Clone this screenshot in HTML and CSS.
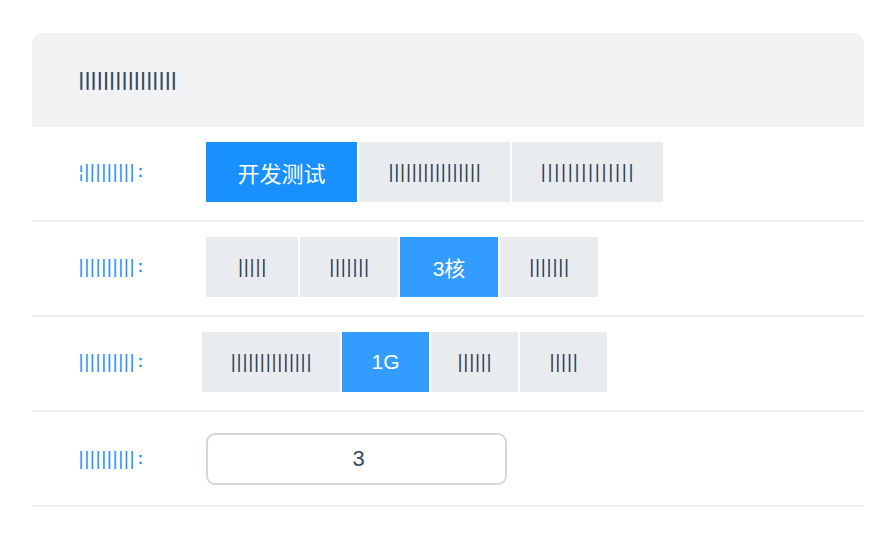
FILE: index.html
```html
<!DOCTYPE html>
<html lang="zh-CN">
<head>
<meta charset="utf-8">
<title>配置</title>
<link rel="stylesheet" href="styles.css">
</head>
<body>
<div class="card">
  <div class="card-head"><span class="bars bars-head">||||||||||||||||</span></div>

  <div class="row">
    <div class="label"><span class="bars">¦|||||||||</span><span class="colon">:</span></div>
    <div class="opts">
      <button class="opt w151 primary">开发测试</button>
      <button class="opt w151"><span class="bars">||||||||||||||||</span></button>
      <button class="opt w151"><span class="bars wide">||||||||||||||</span></button>
    </div>
  </div>

  <div class="row">
    <div class="label"><span class="bars">||||||||||</span><span class="colon">:</span></div>
    <div class="opts">
      <button class="opt w92"><span class="bars">|||||</span></button>
      <button class="opt w98"><span class="bars">|||||||</span></button>
      <button class="opt w98 active">3核</button>
      <button class="opt w98"><span class="bars">|||||||</span></button>
    </div>
  </div>

  <div class="row">
    <div class="label"><span class="bars">||||||||||</span><span class="colon">:</span></div>
    <div class="opts shift">
      <button class="opt w138"><span class="bars">||||||||||||||</span></button>
      <button class="opt w87 active">1G</button>
      <button class="opt w87"><span class="bars">||||||</span></button>
      <button class="opt w87"><span class="bars">|||||</span></button>
    </div>
  </div>

  <div class="row row-last">
    <div class="label"><span class="bars">||||||||||</span><span class="colon">:</span></div>
    <div class="opts">
      <div class="num">3</div>
    </div>
  </div>
</div>
</body>
</html>
```

FILE: styles.css
```css
* { box-sizing: border-box; }

body {
  margin: 0;
  padding: 33px 32px 0 32px;
  background: #ffffff;
  font-family: "Liberation Sans", "Noto Sans CJK SC", sans-serif;
}

.card {
  width: 832px;
}

.card-head {
  height: 94px;
  background: #f1f2f4;
  border-radius: 10px 10px 0 0;
  display: flex;
  align-items: center;
  padding-left: 46px;
}

.bars {
  font-family: "DejaVu Sans", sans-serif;
  font-size: 18px;
  letter-spacing: -0.25px;
  line-height: 1;
  color: #2f4052;
  white-space: nowrap;
}

.bars-head {
  font-weight: bold;
  letter-spacing: -0.4px;
  color: #34495e;
}

.bars.wide {
  letter-spacing: 0.7px;
}

.row {
  height: 95px;
  display: flex;
  align-items: center;
  padding-bottom: 3px;
  border-bottom: 2px solid #eceef1;
}

.row-last {
  padding-bottom: 0;
}

.label {
  width: 174px;
  padding-left: 46px;
  display: flex;
  align-items: center;
}

.label .bars {
  color: #1f8fff;
  letter-spacing: -0.4px;
}

.colon {
  color: #1f8fff;
  font-size: 16px;
  font-weight: bold;
  margin-left: 3px;
  line-height: 1;
}

.opts {
  display: flex;
  gap: 2px;
}

.opts.shift {
  margin-left: -4px;
}

.opt {
  height: 60px;
  border: none;
  padding: 0;
  margin: 0;
  background: #e9ecef;
  color: #34495e;
  font-family: "Liberation Sans", "Noto Sans CJK SC", sans-serif;
  font-size: 21px;
  display: flex;
  align-items: center;
  justify-content: center;
}

.opt.primary {
  background: #1890ff;
  color: #ffffff;
  font-size: 22px;
}

.opt.active {
  background: #339cff;
  color: #ffffff;
}

.w151 { width: 151px; }
.w138 { width: 138px; }
.w98 { width: 98px; }
.w92 { width: 92px; }
.w87 { width: 87px; }

.num {
  width: 301px;
  height: 52px;
  border: 2px solid #d3d8de;
  border-radius: 9px;
  display: flex;
  align-items: center;
  justify-content: center;
  padding-left: 4px;
  font-size: 22px;
  color: #34495e;
}
```
